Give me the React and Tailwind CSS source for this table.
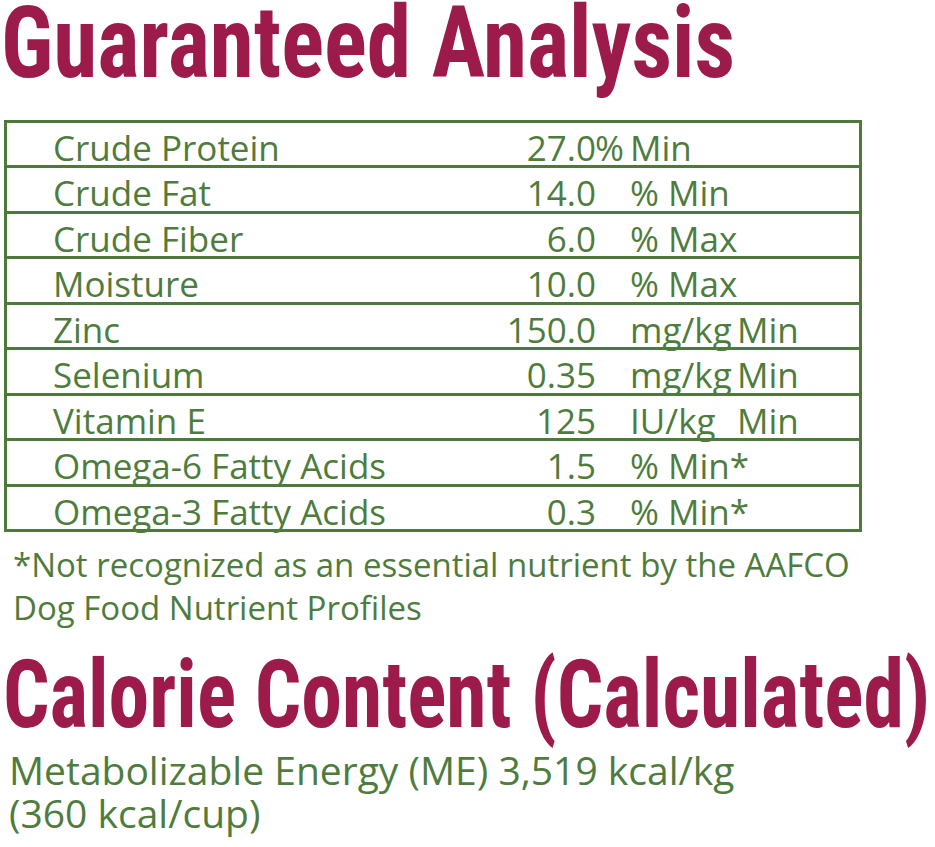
const rows = [
  { name: "Crude Protein", value: "27.0", unit: "pct-min" },
  { name: "Crude Fat", value: "14.0", unit: "% Min" },
  { name: "Crude Fiber", value: "6.0", unit: "% Max" },
  { name: "Moisture", value: "10.0", unit: "% Max" },
  { name: "Zinc", value: "150.0", unit: "mg/kg", tail: "Min" },
  { name: "Selenium", value: "0.35", unit: "mg/kg", tail: "Min" },
  { name: "Vitamin E", value: "125", unit: "IU/kg", tail: "Min" },
  { name: "Omega-6 Fatty Acids", value: "1.5", unit: "% Min*" },
  { name: "Omega-3 Fatty Acids", value: "0.3", unit: "% Min*" },
];

const Unit = ({ row }) => {
  if (row.unit === "pct-min") {
    return (
      <span>
        <span className="inline-block w-[35px] -ml-[35px]">%</span>Min
      </span>
    );
  }
  if (row.tail) {
    return (
      <span>
        <span className="inline-block w-[107px]">{row.unit}</span>
        {row.tail}
      </span>
    );
  }
  return <span>{row.unit}</span>;
};

export default function App() {
  return (
    <div className="w-[935px] h-[847px] overflow-hidden bg-white font-['Open_Sans',sans-serif] text-[#4e7c3c]">
      <h1 className="pl-[1px] pt-[2px] leading-[82px] text-[101px] font-bold font-['Roboto_Condensed',sans-serif] text-[#9c1b4b] whitespace-nowrap">
        <span className="inline-block origin-left scale-x-[0.885]">Guaranteed Analysis</span>
      </h1>

      <div className="mt-[36px] ml-[4px] w-[858px] h-[412px] flex flex-col border-[3px] border-[#4d7a3a]">
        {rows.map((row, i) => (
          <div
            key={row.name}
            className={
              "flex-1 min-h-0 grid grid-cols-[353px_156px_1fr] gap-x-[34px] items-center pl-[46px] pt-[4px] text-[35px] leading-[42px] whitespace-nowrap " +
              (i < rows.length - 1 ? "border-b-[3px] border-[#4d7a3a]" : "")
            }
          >
            <span>{row.name}</span>
            <span className="text-right">{row.value}</span>
            <Unit row={row} />
          </div>
        ))}
      </div>

      <p className="mt-[11px] pl-[13px] text-[33px] leading-[43px]">
        *Not recognized as an essential nutrient by the AAFCO
        <br />
        Dog Food Nutrient Profiles
      </p>

      <h2 className="mt-[26px] pl-[3px] leading-[80px] text-[94px] font-bold font-['Roboto_Condensed',sans-serif] text-[#9c1b4b] whitespace-nowrap">
        <span className="inline-block origin-left scale-x-[0.869]">Calorie Content (Calculated)</span>
      </h2>

      <p className="mt-[13px] pl-[9px] text-[39px] leading-[43px]">
        Metabolizable Energy (ME) 3,519 kcal/kg
        <br />
        (360 kcal/cup)
      </p>
    </div>
  );
}
